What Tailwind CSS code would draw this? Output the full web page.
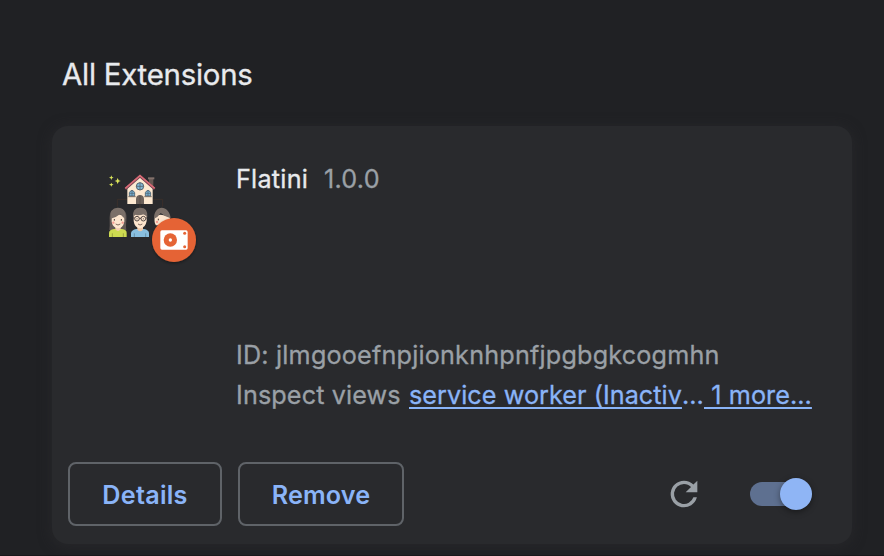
<!DOCTYPE html>
<html lang="en">
<head>
<meta charset="utf-8">
<title>Extensions</title>
<script src="https://cdn.jsdelivr.net/npm/@tailwindcss/browser@4"></script>
</head>
<body class="h-[556px] w-[884px] overflow-hidden bg-[#202124] font-['Inter','Liberation_Sans',sans-serif] text-[#e8eaed]">
<main class="h-full border-b border-[#19181b] pl-[52px] pt-[55px]">
  <h1 class="h-10 pl-[10px] text-[29.4px] leading-10 tracking-[-0.25px] whitespace-nowrap [-webkit-text-stroke:0.3px_currentColor]"><span>All Extensions</span></h1>
  <section class="mt-[31px] flex h-[418px] w-[800px] flex-col rounded-[16px] bg-[#292a2d] shadow-[0_2px_12px_2px_rgba(41,42,45,0.6)]">
    <div class="flex h-[296px] pl-12">
      <svg class="mt-[39px] h-[105px] w-[110px] shrink-0" viewBox="0 0 330 315" aria-hidden="true">
        <defs>
          <filter id="sh" x="-20%" y="-20%" width="140%" height="150%"><feDropShadow dx="0" dy="4" stdDeviation="5" flood-color="#000" flood-opacity=".4"/></filter>
          <g id="girl">
            <path d="M28 195C31 178 27 160 30 146C34 127 72 124 78 145C82 160 76 178 79 195Z" fill="#625955"/>
            <path d="M27 216V203Q28 194 42 192H66Q80 194 80 203V216Z" fill="#cddb51"/>
            <path d="M46 183H62V193Q54 203 46 193Z" fill="#f4cfb0"/>
            <path d="M35 155Q54 139 73 157V170Q69 189 54 190Q39 189 35 171Z" fill="#fde6cf"/>
            <path d="M32 161Q29 127 54 128Q79 128 76 162Q68 157 62 146Q49 157 32 161Z" fill="#7b7069"/>
            <path d="M43 162v5M64 162v5" stroke="#443b38" stroke-width="3"/>
            <path d="M47 177Q54 183 61 177" fill="none" stroke="#695047" stroke-width="2.5"/>
            <circle cx="40" cy="173" r="3.5" fill="#f39b91"/><circle cx="68" cy="173" r="3.5" fill="#f39b91"/>
            <path d="M37 205v11M70 205v11" stroke="#8f993a" stroke-width="2.5"/>
          </g>
        </defs>
        <path d="M52 125V103H188V125M120 117V127" fill="none" stroke="#3d302a" stroke-width="2.5"/>
        <path d="M34 31l2 5 5 2-5 2-2 5-2-5-5-2 5-2zM53 39l3 7 6 2-6 2-3 7-3-7-6-2 6-2zM34 53l2 4 5 2-5 2-2 4-2-4-5-2 5-2z" fill="#dce65b"/>
        <path d="M147 39H160V68L147 57Z" fill="#675752"/><path d="M144 37H163V43H144Z" fill="#83716b"/>
        <path d="M82 70L120 34L158 70V117H82Z" fill="#fde9d1"/>
        <path d="M76 72L120 34L164 72" fill="none" stroke="#744150" stroke-width="7"/>
        <path d="M76 70L120 32L164 70" fill="none" stroke="#d86b76" stroke-width="5"/>
        <circle cx="120" cy="64" r="11" fill="#82b9d7" stroke="#55616b" stroke-width="3"/>
        <path d="M120 53V75M109 64H131" stroke="#55616b" stroke-width="2.5"/>
        <path d="M88 93V83Q96 69 104 83V93ZM136 93V83Q144 69 152 83V93Z" fill="#76aed0" stroke="#4f626e" stroke-width="2.5"/>
        <path d="M96 76V93M88 85H104M144 76V93M136 85H152" stroke="#4f626e" stroke-width="2"/>
        <path d="M85 95H107M133 95H155" stroke="#766b64" stroke-width="3"/>
        <path d="M108 117V101Q109 90 120 90Q131 90 132 101V117Z" fill="#6d625b"/><path d="M120 92V117" stroke="#514944" stroke-width="2"/>
        <use href="#girl"/>
        <path d="M93 216V203Q95 195 109 192H132Q146 195 147 203V216Z" fill="#89bfe0"/>
        <path d="M112 183H129V194Q120 203 112 194Z" fill="#efc9a9"/>
        <path d="M101 148H140V168Q136 190 120 190Q104 190 101 168Z" fill="#fde5cd"/>
        <path d="M99 157Q96 128 120 128Q144 127 142 156Q136 151 130 147Q119 153 106 149Z" fill="#796e67"/>
        <circle cx="111" cy="161" r="7" fill="none" stroke="#554a46" stroke-width="3"/><circle cx="130" cy="161" r="7" fill="none" stroke="#554a46" stroke-width="3"/>
        <path d="M118 160H123M99 159H104M137 159H142M111 160v3M130 160v3" stroke="#554a46" stroke-width="3"/>
        <path d="M114 177Q120 183 127 177" fill="none" stroke="#695047" stroke-width="2.5"/>
        <path d="M103 205v11M137 205v11" stroke="#6089a2" stroke-width="2.5"/>
        <path d="M164 158Q176 141 210 157V181H168Q162 174 164 158Z" fill="#fde6cf"/>
        <path d="M162 161C162 117 208 119 212 160Q197 157 182 144Q174 157 162 161Z" fill="#7b7069"/>
        <path d="M175 161v5" stroke="#443b38" stroke-width="3"/><circle cx="171" cy="171" r="3.5" fill="#f39b91"/>
        <circle cx="222" cy="225" r="66" fill="#e56435" filter="url(#sh)"/>
        <rect x="181" y="196" width="82" height="58" rx="5" fill="#fff"/>
        <circle cx="211" cy="225" r="20" fill="#e56435"/><circle cx="211" cy="225" r="5" fill="#fff"/>
        <circle cx="254" cy="205" r="4.5" fill="#e56435"/><circle cx="254" cy="245" r="4.5" fill="#e56435"/>
      </svg>
      <div class="ml-[26px] w-[576px] pt-[33px] text-[25.2px] leading-10 whitespace-nowrap [-webkit-text-stroke:0.3px_currentColor]">
        <div class="flex h-10 tracking-[0.25px]"><span class="w-[88px]">Flatini</span><span class="text-[#9aa0a6]">1.0.0</span></div>
        <div class="mt-[136px] h-10 tracking-[0.19px] text-[#9aa0a6]"><span>ID: jlmgooefnpjionknhpnfjpgbgkcogmhn</span></div>
        <div class="flex h-10 text-[#9aa0a6]"><span class="w-[173px] tracking-[0.12px]">Inspect views</span><a class="w-[273px] tracking-[0.05px] text-[#8ab4f8] underline decoration-2 underline-offset-[3px]">service worker (Inactiv</a><span class="w-[22px] text-[#8ab4f8]">…</span><a class="whitespace-pre tracking-[0.1px] text-[#8ab4f8] underline decoration-2 underline-offset-[3px]"> 1 more…</a></div>
      </div>
    </div>
    <div class="mt-10 flex h-16 items-center pl-4 text-[25.2px] font-semibold text-[#8ab4f8]">
      <button class="h-16 w-[154px] rounded-[8px] border-2 border-[#5f6368] pt-[3px] tracking-[0.25px]"><span>Details</span></button>
      <button class="ml-4 h-16 w-[166px] rounded-[8px] border-2 border-[#5f6368] pt-[3px] tracking-[0.12px]"><span>Remove</span></button>
      <svg class="ml-[260px] h-10 w-10" viewBox="0 0 24 24" fill="#9aa0a6" aria-hidden="true"><path d="M17.65 6.35A7.96 7.96 0 0 0 12 4a8 8 0 1 0 7.73 10h-2.08A6 6 0 1 1 12 6c1.66 0 3.14.69 4.22 1.78L13 11h7V4z"/></svg>
      <div class="ml-[46px] flex h-8 w-[62px] items-center" role="switch" aria-checked="true">
        <div class="flex h-6 w-[56px] shrink-0 items-center rounded-full bg-[#5e7090] pl-[30px]"><div class="h-8 w-8 shrink-0 rounded-full bg-[#8fb5f5] shadow-[0_2px_6px_rgba(0,0,0,0.4)]"></div></div>
      </div>
    </div>
  </section>
</main>
</body>
</html>
